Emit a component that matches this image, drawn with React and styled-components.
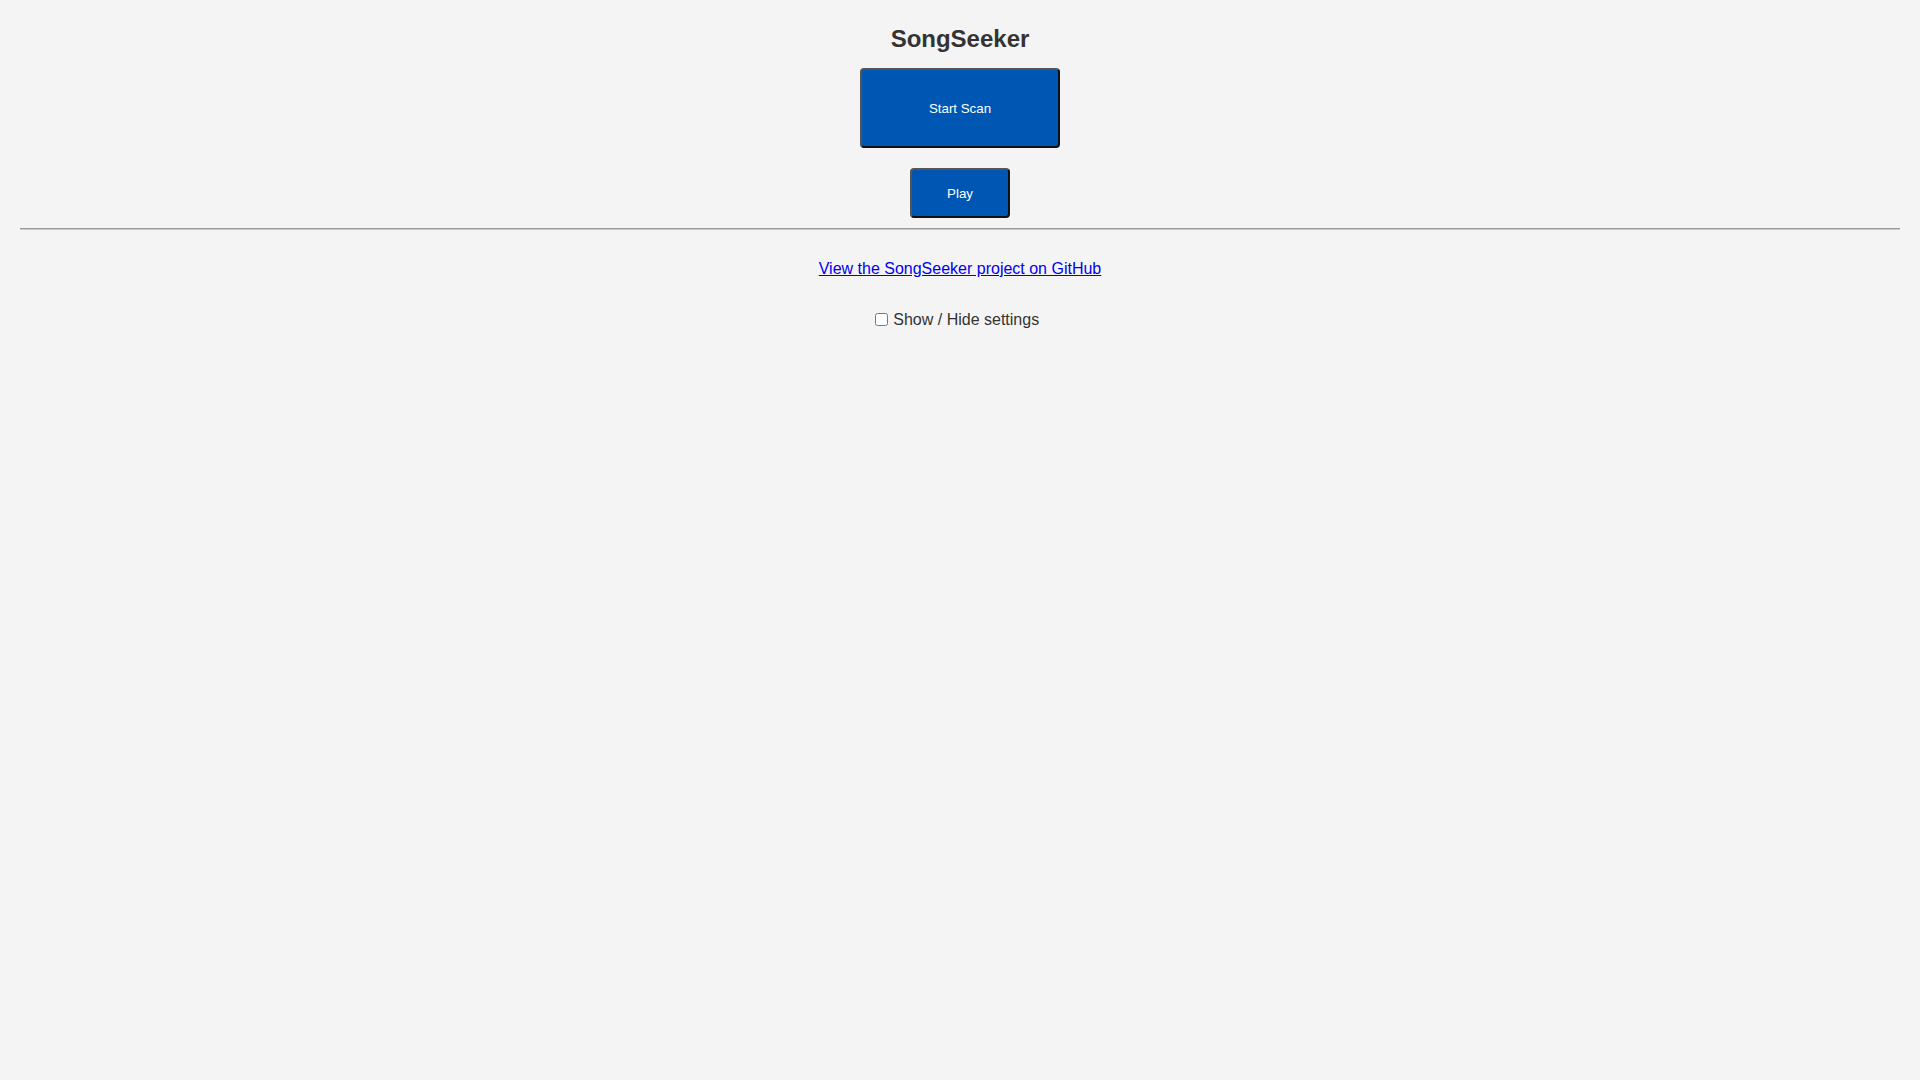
import React from 'react'
import styled, { createGlobalStyle } from 'styled-components'

const GlobalStyle = createGlobalStyle`
  body {
    margin: 0;
    background: #f4f4f4;
    font-family: "Liberation Sans", Arial, sans-serif;
    color: #333;
  }
`

const Page = styled.div`
  padding: 0 20px;
  text-align: center;
`

const Title = styled.h1`
  margin: 0;
  padding: 25px 0 15px;
  font-size: 24px;
  line-height: 28px;
  font-weight: 700;
  color: #333;
`

const ActionButton = styled.button`
  display: block;
  margin: 0 auto ${p => p.$gap}px;
  width: ${p => p.$w}px;
  height: ${p => p.$h}px;
  background: #0056b3;
  color: #fff;
  font-family: "Liberation Sans", Arial, sans-serif;
  font-size: 13.33px;
  border-width: 2px;
  border-style: solid;
  border-color: #555 #111 #111 #555;
  border-radius: 4px;
  cursor: pointer;
`

const Divider = styled.hr`
  margin: 0 0 30px;
  border: none;
  border-top: 1px solid #9a9a9a;
  border-bottom: 1px solid #c8c8c8;
`

const RepoLink = styled.a`
  display: block;
  font-size: 16px;
  line-height: 18px;
  color: #0000ee;
  text-decoration: underline;
  width: fit-content;
  margin: 0 auto;
`

const SettingsToggle = styled.div`
  margin-top: 32px;
  padding-right: 10px;
  font-size: 16px;
  line-height: 18px;
  color: #333;
  input {
    margin: 3px 1px 3px 4px;
    width: 13px;
    height: 13px;
    vertical-align: -1px;
  }
`

export default function App() {
  return (
    <>
      <GlobalStyle />
      <Page>
        <Title>SongSeeker</Title>
        <ActionButton $w={200} $h={80} $gap={20}>Start Scan</ActionButton>
        <ActionButton $w={100} $h={50} $gap={10}>Play</ActionButton>
        <Divider />
        <RepoLink href="#">View the SongSeeker project on GitHub</RepoLink>
        <SettingsToggle>
          <input type="checkbox" id="settings-toggle" />{' '}
          <label htmlFor="settings-toggle">Show / Hide settings</label>
        </SettingsToggle>
      </Page>
    </>
  )
}
